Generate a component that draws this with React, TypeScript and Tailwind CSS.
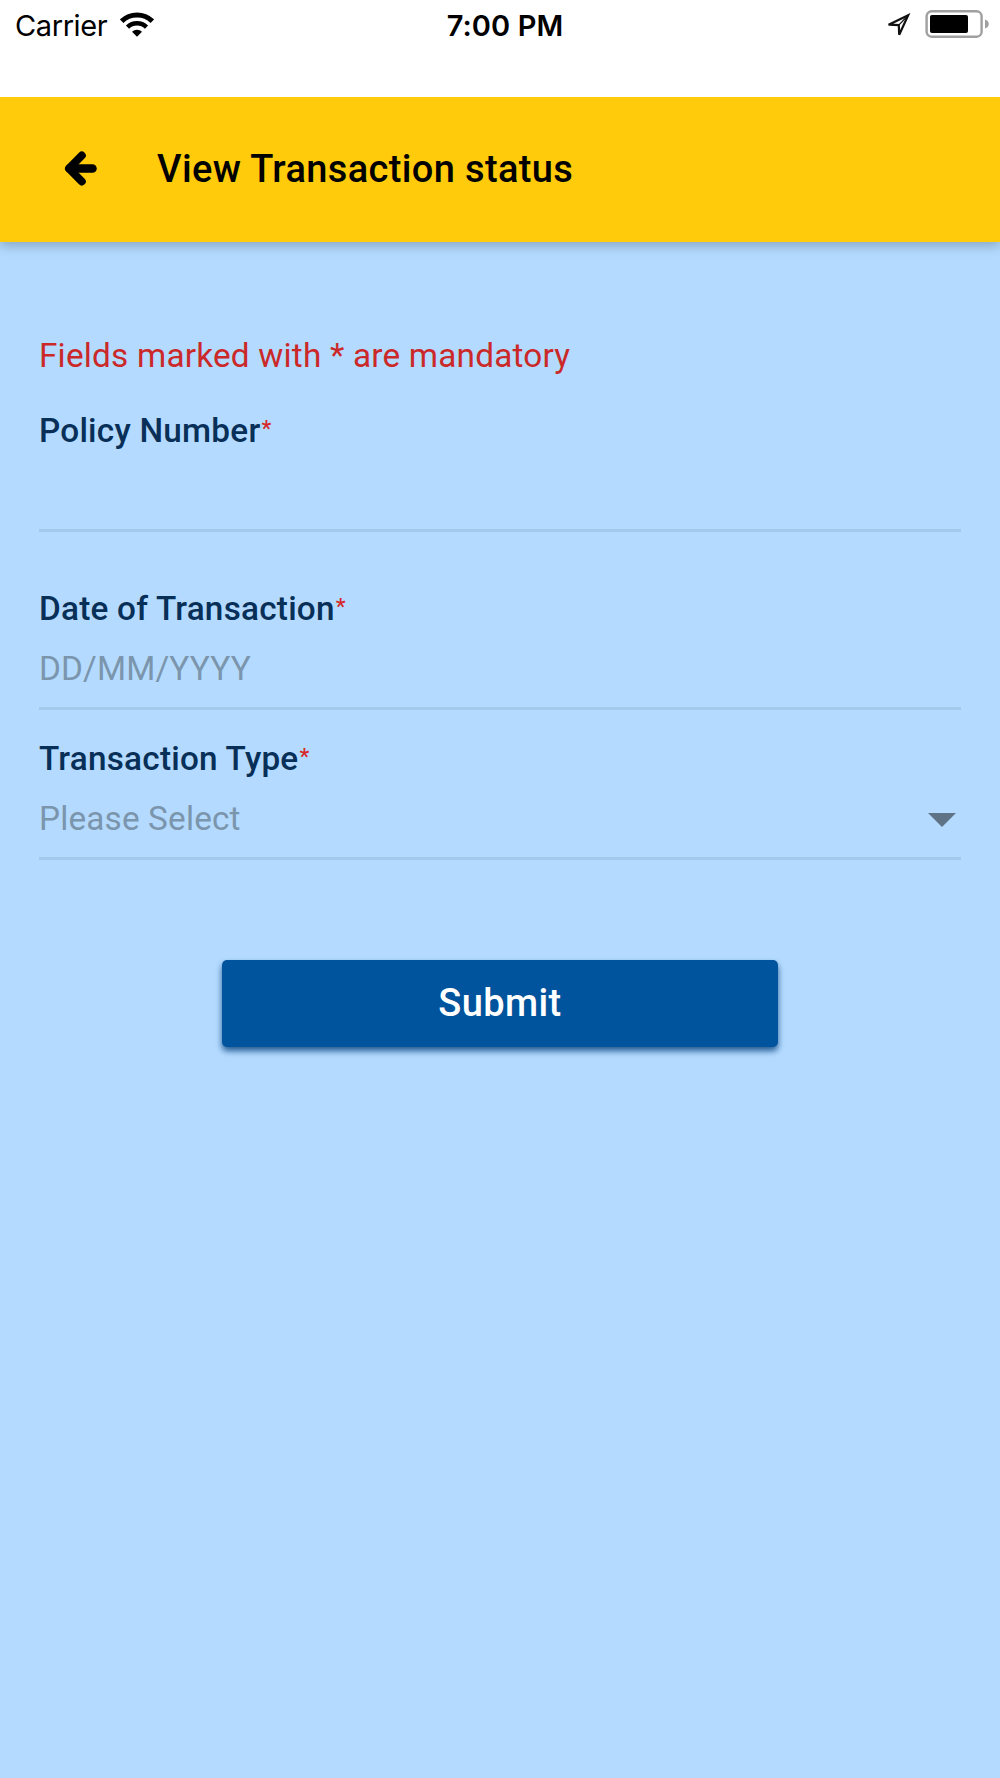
import { useState } from 'react'

const FIELDS = [
  { key: 'policy', label: 'Policy Number', placeholder: '', spacing: 'mt-[35px]', select: false },
  { key: 'date', label: 'Date of Transaction', placeholder: 'DD/MM/YYYY', spacing: 'mt-[57px]', select: false },
  { key: 'type', label: 'Transaction Type', placeholder: 'Please Select', spacing: 'mt-[29px]', select: true },
]

function StatusBar() {
  return (
    <div className="z-10 grid h-[97px] grid-cols-3 items-start bg-white px-[15px] pt-[5px] font-['Inter'] text-black">
      <div className="flex h-10 items-center">
        <span className="pt-px text-[29px] leading-10 tracking-[-0.4px]">Carrier</span>
        <svg className="ml-[13px] -mt-[2px]" width="34" height="25" viewBox="0 0 34 25" fill="none" stroke="#000">
          <path d="M1.7 9.2a22 22 0 0 1 30.6 0" strokeWidth="5" />
          <path d="M7.5 15.1a13.8 13.8 0 0 1 19 0" strokeWidth="4.6" />
          <path d="M17 24.8l-5-5a7.2 7.2 0 0 1 10 0z" fill="#000" stroke="none" />
        </svg>
      </div>
      <span className="pl-[10px] pt-px text-center text-[29px] font-semibold leading-10 tracking-[0.1px]">7:00 PM</span>
      <div className="flex h-10 items-center justify-end">
        <svg className="mr-[14px]" width="25" height="25" viewBox="0 0 25 25" fill="none" stroke="#111" strokeWidth="2.2">
          <path d="M22.2 2.2L2.6 11.7l10.2.4.4 9.7z" />
          <path d="M22.2 2.2l-9.4 9.9" strokeWidth="1.3" />
        </svg>
        <svg className="-mr-[4px] -mt-[2px]" width="64" height="28" viewBox="0 0 64 28">
          <rect x="1.6" y="1.3" width="55" height="25.4" rx="5" fill="#fff" stroke="#a0a0a0" strokeWidth="2.4" />
          <rect x="5" y="5" width="38" height="18" rx="2" fill="#000" />
          <path d="M60 9.5c5 1.5 5 7.5 0 9z" fill="#a0a0a0" />
        </svg>
      </div>
    </div>
  )
}

export default function App() {
  const [values, setValues] = useState<Record<string, string>>({})

  return (
    <div className="flex min-h-[1778px] flex-col bg-[#b4dbff] font-['Roboto']">
      <StatusBar />

      {/* Title bar */}
      <header className="flex h-[145px] items-center bg-[#ffcb0a] pl-[63.5px] shadow-[0_4px_11px_rgba(0,0,0,0.24)]">
        <button type="button" aria-label="Back" className="-mt-[2px]">
          <svg width="33" height="35" viewBox="0 0 33 35" fill="none" stroke="#000" strokeLinecap="round" strokeLinejoin="round">
            <path d="M17.8 4.5L5 17.5l12.8 13" strokeWidth="8" />
            <path d="M5.5 17.5h23" strokeWidth="8.5" />
          </svg>
        </button>
        <h1 className="ml-[60.5px] -mt-[2px] text-[38px] font-medium leading-[44px] tracking-[0.36px] text-black">View Transaction status</h1>
      </header>

      <form className="px-[39px] pt-[94px]" onSubmit={(e) => e.preventDefault()}>
        <p className="text-[33.33px] leading-10 tracking-[0.2px] text-[#cb2929]">Fields marked with * are mandatory</p>

        {FIELDS.map((field) => (
          <div key={field.key} className={field.spacing}>
            <label htmlFor={field.key} className="flex h-10 text-[33.33px] font-medium leading-10 tracking-[0.22px] text-[#082f57]">
              {field.label}
              <span className="ml-px text-[22px] font-medium leading-9 text-[#d62828]">*</span>
            </label>
            <div className="flex h-[81px] items-start border-b-[3px] border-[#a5c9ea] pt-5">
              <input
                id={field.key}
                value={values[field.key] ?? ''}
                onChange={(e) => setValues({ ...values, [field.key]: e.target.value })}
                placeholder={field.placeholder}
                className="h-10 min-w-0 flex-1 bg-transparent text-[33.33px] leading-10 tracking-[0.15px] text-[#082f57] outline-none placeholder:text-[#7b95ad]"
              />
              {field.select && (
                <svg className="mr-[5px] mt-[14px]" width="28" height="14" viewBox="0 0 28 14" fill="#5f7386">
                  <path d="M0 0h28L14 14z" />
                </svg>
              )}
            </div>
          </div>
        ))}

        <div className="mt-[100px] flex justify-center">
          <button
            type="submit"
            className="h-[87px] w-[556px] rounded-[5px] bg-[#00539d] pb-px text-[38px] font-medium leading-[44px] tracking-[0.4px] text-white shadow-[0_4px_6px_rgba(0,60,120,0.8)]"
          >
            Submit
          </button>
        </div>
      </form>
    </div>
  )
}
